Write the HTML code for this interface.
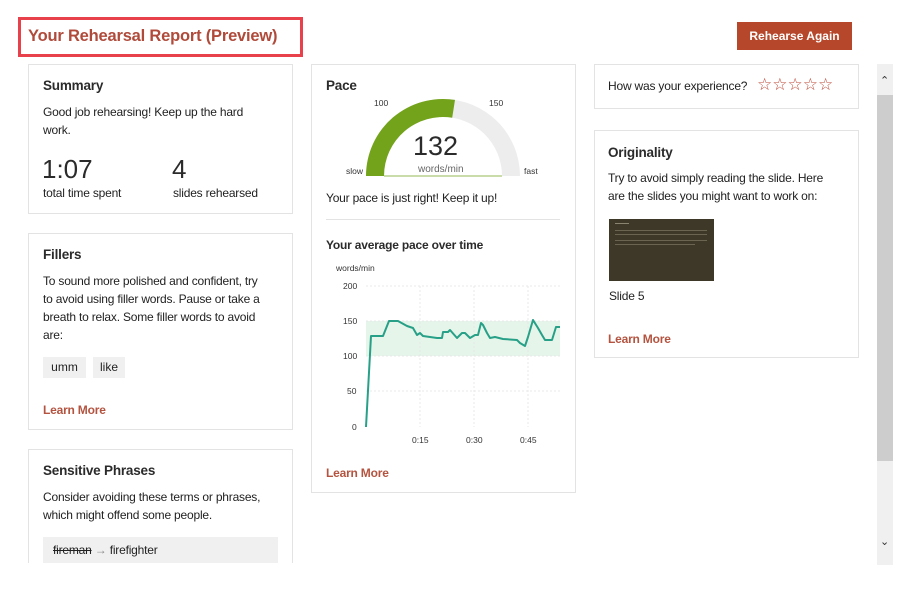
<!DOCTYPE html>
<html><head><meta charset="utf-8"><style>
*{margin:0;padding:0;box-sizing:border-box}
body{width:900px;height:600px;background:#fff;font-family:"Liberation Sans",sans-serif;color:#222;position:relative;overflow:hidden}
.a{position:absolute;white-space:nowrap}
.card{position:absolute;border:1px solid #e3e3e3;background:#fff}
.h{font-size:13.5px;font-weight:bold;color:#2b2b2b;letter-spacing:-0.2px}
.t{font-size:12px;color:#222;letter-spacing:-0.2px}
.lm{font-size:12px;font-weight:bold;color:#b4533f;letter-spacing:-0.2px}
.big{font-size:26px;color:#2b2b2b}
.tag{position:absolute;background:#f0f0f0;font-size:12px;padding:3px 0;text-align:center;height:21px;line-height:15px}
.sm{font-size:8.5px;color:#333}
</style></head><body>
<div class="a" style="left:18px;top:17px;width:285px;height:40px;border:3px solid #e8414b"></div>
<div class="a" style="left:28px;top:27px;font-size:16.5px;font-weight:bold;color:#b04a3a;letter-spacing:-0.2px">Your Rehearsal Report (Preview)</div>
<div class="a" style="left:737px;top:22px;width:115px;height:28px;background:#b7472a;color:#fff;font-size:12px;font-weight:bold;text-align:center;line-height:28px">Rehearse Again</div>

<div class="card" style="left:28px;top:64px;width:265px;height:150px"></div>
<div class="a h" style="left:43px;top:78px">Summary</div>
<div class="a t" style="left:43px;top:105px">Good job rehearsing! Keep up the hard</div>
<div class="a t" style="left:43px;top:123px">work.</div>
<div class="a big" style="left:42px;top:154px">1:07</div>
<div class="a big" style="left:172px;top:154px">4</div>
<div class="a t" style="left:43px;top:186px">total time spent</div>
<div class="a t" style="left:173px;top:186px">slides rehearsed</div>

<div class="card" style="left:28px;top:233px;width:265px;height:197px"></div>
<div class="a h" style="left:43px;top:247px">Fillers</div>
<div class="a t" style="left:43px;top:274px">To sound more polished and confident, try</div>
<div class="a t" style="left:43px;top:292px">to avoid using filler words. Pause or take a</div>
<div class="a t" style="left:43px;top:310px">breath to relax. Some filler words to avoid</div>
<div class="a t" style="left:43px;top:328px">are:</div>
<div class="tag" style="left:43px;top:357px;width:43px">umm</div>
<div class="tag" style="left:93px;top:357px;width:32px">like</div>
<div class="a lm" style="left:43px;top:403px">Learn More</div>

<div class="card" style="left:28px;top:449px;width:265px;height:140px"></div>
<div class="a h" style="left:43px;top:463px">Sensitive Phrases</div>
<div class="a t" style="left:43px;top:490px">Consider avoiding these terms or phrases,</div>
<div class="a t" style="left:43px;top:508px">which might offend some people.</div>
<div class="a" style="left:43px;top:537px;width:235px;height:27px;background:#f0f0f0"></div>
<div class="a t" style="left:53px;top:543px"><span style="text-decoration:line-through">fireman</span> <span style="color:#888">→</span> firefighter</div>
<div class="a" style="left:0;top:563px;width:875px;height:40px;background:#fff"></div>

<div class="card" style="left:311px;top:64px;width:265px;height:429px"></div>
<div class="a h" style="left:326px;top:78px">Pace</div>
<svg class="a" style="left:311px;top:64px" width="265" height="429" viewBox="311 64 265 429">
<path d="M366 176 A77 77 0 0 1 520 176 L502 176 A59 59 0 0 0 384 176 Z" fill="#ededed"/>
<path d="M366 176 A77 77 0 0 1 455 99.9 L452.2 117.7 A59 59 0 0 0 384 176 Z" fill="#73a31b"/>
<line x1="384" y1="176" x2="502" y2="176" stroke="#73a31b" stroke-width="0.8"/>
<rect x="326" y="219" width="234" height="1" fill="#e3e3e3"/>
<rect x="366" y="321" width="194" height="35" fill="#e5f5ea"/>
<g stroke="#e8e8e8" stroke-dasharray="2,2" stroke-width="1">
<line x1="366" y1="286" x2="560" y2="286"/><line x1="366" y1="321" x2="560" y2="321"/><line x1="366" y1="356" x2="560" y2="356"/><line x1="366" y1="391" x2="560" y2="391"/>
<line x1="420" y1="286" x2="420" y2="427"/><line x1="474" y1="286" x2="474" y2="427"/><line x1="528" y1="286" x2="528" y2="427"/>
</g>
<polyline fill="none" stroke="#27a087" stroke-width="2" stroke-linejoin="round" points="366,427 371,336 383,336 389,321 398,321 407,326 413,328 417,335 420,333 423,336 437,338 442,338 443,332 448,332 450,330 457,338 462,333 465,333 470,338 475,335 478,335 481,323 483,325 487,333 490,338 495,337 503,339 517,340 520,343 525,346 528,337 533,320 538,328 542,335 545,340 552,340 556,327 560,327"/>
</svg>
<div class="a sm" style="left:374px;top:98px">100</div>
<div class="a sm" style="left:489px;top:98px">150</div>
<div class="a sm" style="left:346px;top:166px">slow</div>
<div class="a sm" style="left:524px;top:166px">fast</div>
<div class="a" style="left:413px;top:131px;font-size:27px;color:#2b2b2b">132</div>
<div class="a" style="left:418px;top:164px;font-size:10px;color:#666">words/min</div>
<div class="a t" style="left:326px;top:191px">Your pace is just right! Keep it up!</div>
<div class="a" style="left:326px;top:238px;font-size:12px;font-weight:bold;color:#2b2b2b;letter-spacing:-0.2px">Your average pace over time</div>
<div class="a sm" style="left:336px;top:263px">words/min</div>
<div class="a sm" style="left:343px;top:281px">200</div>
<div class="a sm" style="left:343px;top:316px">150</div>
<div class="a sm" style="left:343px;top:351px">100</div>
<div class="a sm" style="left:347px;top:386px">50</div>
<div class="a sm" style="left:352px;top:422px">0</div>
<div class="a sm" style="left:412px;top:435px">0:15</div>
<div class="a sm" style="left:466px;top:435px">0:30</div>
<div class="a sm" style="left:520px;top:435px">0:45</div>
<div class="a lm" style="left:326px;top:466px">Learn More</div>

<div class="card" style="left:594px;top:64px;width:265px;height:45px"></div>
<div class="a t" style="left:608px;top:79px">How was your experience?</div>
<div class="a" style="left:757px;top:75px;font-size:17px;color:#c0503f;letter-spacing:0px">☆☆☆☆☆</div>

<div class="card" style="left:594px;top:130px;width:265px;height:228px"></div>
<div class="a h" style="left:608px;top:145px">Originality</div>
<div class="a t" style="left:608px;top:171px">Try to avoid simply reading the slide. Here</div>
<div class="a t" style="left:608px;top:189px">are the slides you might want to work on:</div>
<div class="a" style="left:609px;top:219px;width:105px;height:62px;background:#3d3827"></div>
<div class="a" style="left:615px;top:223px;width:14px;height:1px;background:#8a8470"></div>
<div class="a" style="left:615px;top:230px;width:92px;height:1px;background:#6a6450"></div>
<div class="a" style="left:615px;top:234px;width:92px;height:1px;background:#6a6450"></div>
<div class="a" style="left:615px;top:240px;width:92px;height:1px;background:#6a6450"></div>
<div class="a" style="left:615px;top:244px;width:80px;height:1px;background:#6a6450"></div>
<div class="a t" style="left:609px;top:289px">Slide 5</div>
<div class="a lm" style="left:608px;top:332px">Learn More</div>

<div class="a" style="left:877px;top:64px;width:16px;height:501px;background:#f0f0f0"></div>
<div class="a" style="left:877px;top:95px;width:16px;height:366px;background:#cdcdcd"></div>
<div class="a" style="left:880px;top:74px;font-size:11px;color:#333">⌃</div>
<div class="a" style="left:880px;top:535px;font-size:11px;color:#333">⌄</div>
</body></html>
